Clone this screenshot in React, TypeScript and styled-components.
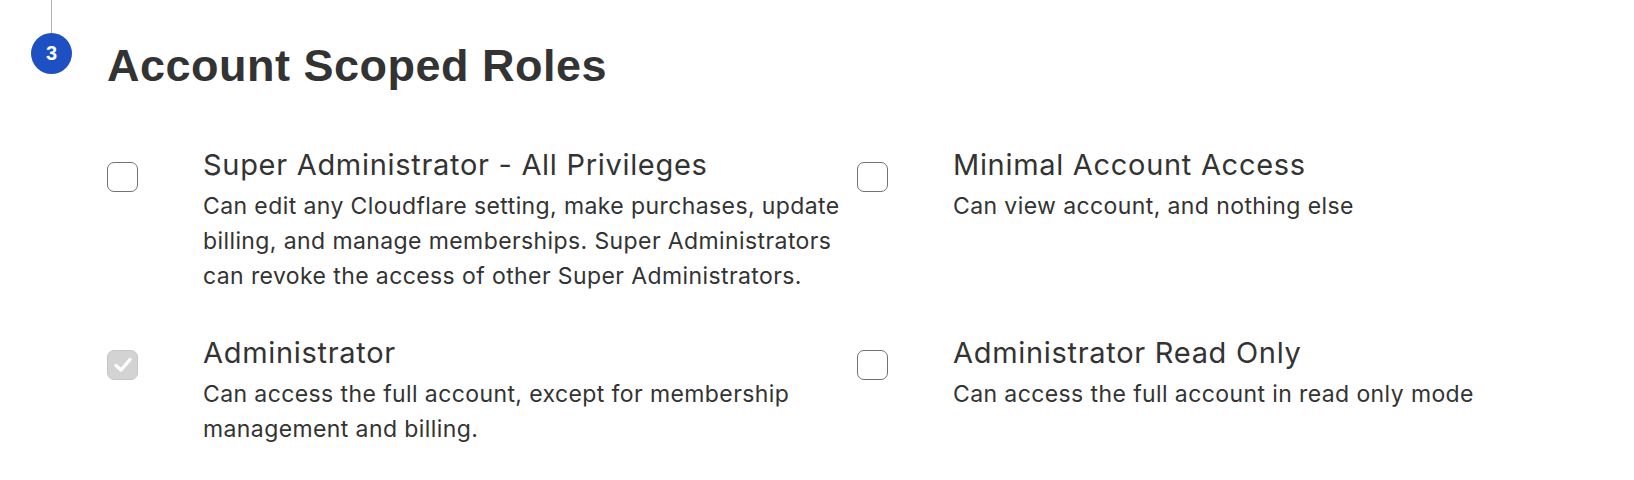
import React from "react";
import styled, { createGlobalStyle } from "styled-components";

const GlobalStyle = createGlobalStyle`
  html, body {
    margin: 0;
    padding: 0;
    background: #ffffff;
  }
  body {
    font-family: Inter, "Liberation Sans", Arial, sans-serif;
    color: #333333;
  }
`;

const Section = styled.section`
  display: flex;
  align-items: flex-start;
  width: 1634px;
  height: 480px;
  overflow: hidden;
`;

const Rail = styled.div`
  display: flex;
  flex-direction: column;
  align-items: center;
  width: 41px;
  margin-left: 31px;
`;

const RailLine = styled.div`
  width: 1px;
  height: 33px;
  background: #b3b3b3;
`;

const StepBadge = styled.div`
  display: flex;
  align-items: center;
  justify-content: center;
  width: 41px;
  height: 41px;
  border-radius: 50%;
  background: #1d50c2;
  color: #ffffff;
  font-family: "Liberation Sans", Arial, sans-serif;
  font-weight: 700;
  font-size: 20px;
`;

const Content = styled.div`
  margin-left: 35px;
  padding-top: 40px;
  display: flex;
  flex-direction: column;
`;

const Title = styled.h2`
  margin: 0;
  font-family: "Liberation Sans", Arial, sans-serif;
  font-weight: 700;
  font-size: 45px;
  letter-spacing: 0.5px;
  line-height: 52px;
  color: #333333;
`;

const RoleGrid = styled.div`
  margin-top: 53px;
  display: grid;
  grid-template-columns: 750px 750px;
  row-gap: 39px;
`;

const RoleItem = styled.label`
  display: flex;
  align-items: flex-start;
  gap: 65px;
  padding-right: 4px;
`;

const Box = styled.span<{ $disabled?: boolean }>`
  flex: 0 0 auto;
  display: flex;
  align-items: center;
  justify-content: center;
  box-sizing: border-box;
  width: 31px;
  height: 30px;
  margin-top: 17px;
  border-radius: 7px;
  border: 1.5px solid ${(p) => (p.$disabled ? "#c6c6c6" : "#717171")};
  background: ${(p) => (p.$disabled ? "#d3d3d3" : "#ffffff")};
`;

const RoleText = styled.div`
  display: flex;
  flex-direction: column;
`;

const RoleName = styled.div`
  font-size: 29px;
  letter-spacing: 0.7px;
  line-height: 40px;
  font-weight: 400;
  color: #333333;
`;

const RoleDesc = styled.div`
  margin-top: 4px;
  font-size: 23px;
  letter-spacing: 0.4px;
  line-height: 35px;
  color: #333333;
`;

type Role = {
  name: string;
  desc: string;
  disabled?: boolean;
};

const roles: Role[] = [
  {
    name: "Super Administrator - All Privileges",
    desc:
      "Can edit any Cloudflare setting, make purchases, update billing, and manage memberships. Super Administrators can revoke the access of other Super Administrators.",
  },
  {
    name: "Minimal Account Access",
    desc: "Can view account, and nothing else",
  },
  {
    name: "Administrator",
    desc: "Can access the full account, except for membership management and billing.",
    disabled: true,
  },
  {
    name: "Administrator Read Only",
    desc: "Can access the full account in read only mode",
  },
];

const CheckMark = () => (
  <svg width="24" height="24" viewBox="0 0 24 24" aria-hidden="true">
    <path
      d="M5 12.5 L10 17 L19 6.5"
      fill="none"
      stroke="#ffffff"
      strokeWidth="3.4"
      strokeLinecap="round"
      strokeLinejoin="round"
    />
  </svg>
);

export default function App() {
  return (
    <>
      <GlobalStyle />
      <Section>
        <Rail>
          <RailLine />
          <StepBadge>3</StepBadge>
        </Rail>
        <Content>
          <Title>Account Scoped Roles</Title>
          <RoleGrid>
            {roles.map((r) => (
              <RoleItem key={r.name}>
                <Box $disabled={r.disabled}>{r.disabled && <CheckMark />}</Box>
                <RoleText>
                  <RoleName>{r.name}</RoleName>
                  <RoleDesc>{r.desc}</RoleDesc>
                </RoleText>
              </RoleItem>
            ))}
          </RoleGrid>
        </Content>
      </Section>
    </>
  );
}
